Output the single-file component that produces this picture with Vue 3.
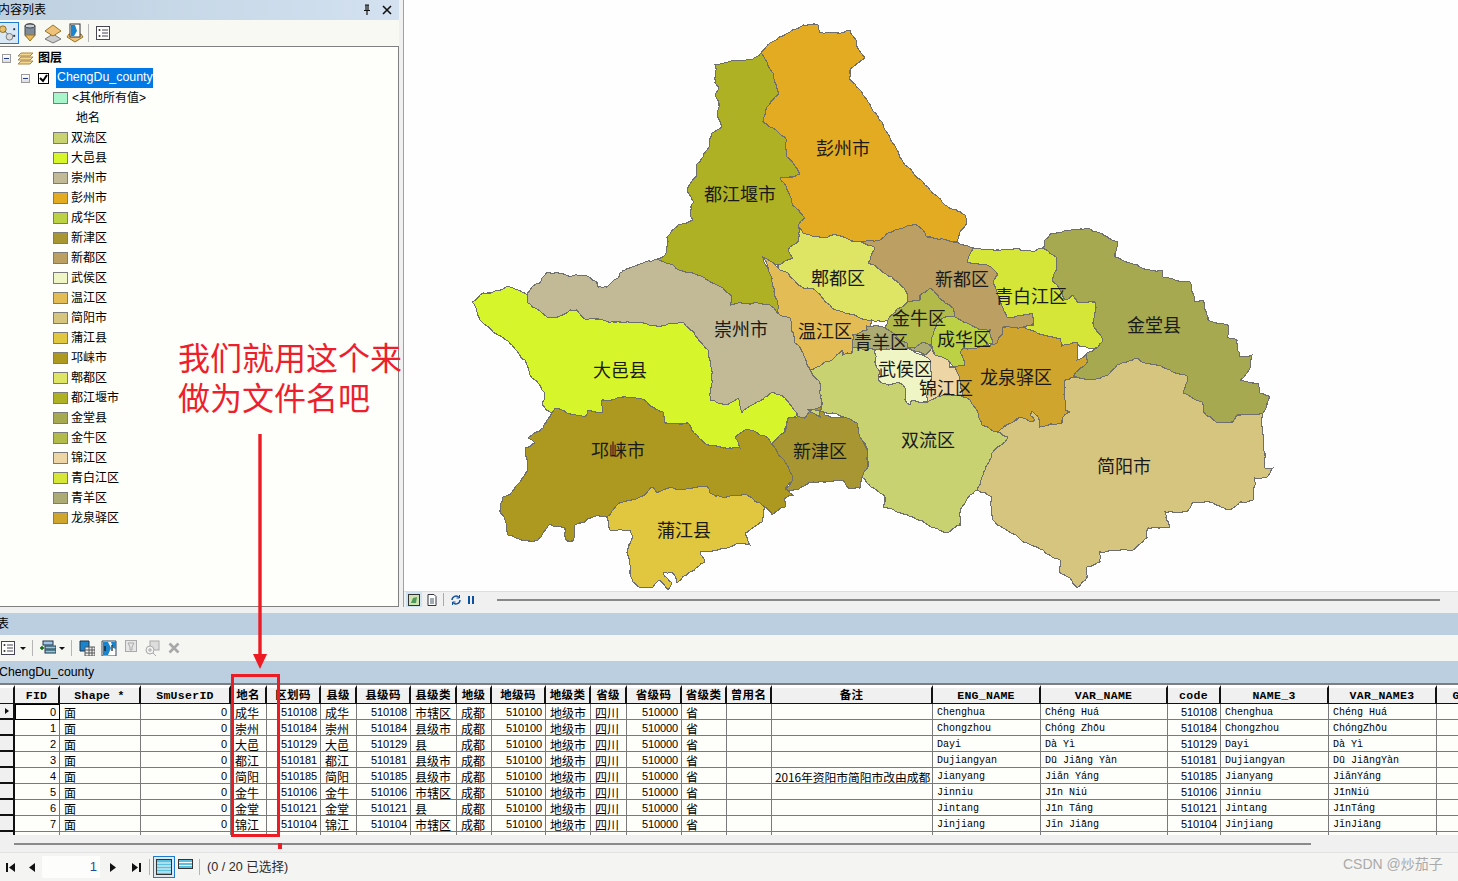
<script setup>
const legend = [
  ['双流区', '#c8d271'], ['大邑县', '#d6f52b'], ['崇州市', '#c2ba97'], ['彭州市', '#e3ab22'],
  ['成华区', '#bcd244'], ['新津区', '#a89632'], ['新都区', '#bb9f63'], ['武侯区', '#f0f5c5'],
  ['温江区', '#e4bc55'], ['简阳市', '#d6c57f'], ['蒲江县', '#e0c73f'], ['邛崃市', '#ad9820'],
  ['郫都区', '#dee564'], ['都江堰市', '#aeb123'], ['金堂县', '#a6a94f'], ['金牛区', '#b2bb4a'],
  ['锦江区', '#eed5a6'], ['青白江区', '#d5e639'], ['青羊区', '#acab74'], ['龙泉驿区', '#cfa52e']
]

const shapes = [
  ['#e3ab22', '761,53 770,43 788,33 803,25 818,25 820,33 837,33 850,30 857,47 865,58 850,70 850,80 867,100 885,130 905,165 925,185 945,205 965,215 967,223 960,232 957,242 927,237 923,230 915,224 903,228 888,233 880,240 857,242 837,235 823,238 803,233 798,225 805,218 792,203 780,178 800,174 787,157 787,140 763,122 767,107 778,95 773,73 767,62'],
  ['#aeb123', '761,53 753,59 740,61 728,62 715,65 715,83 719,88 715,95 719,103 718,118 721,128 712,133 710,145 703,157 696,165 696,177 687,191 694,202 690,212 693,220 678,225 667,237 665,255 657,259 673,265 687,273 703,277 717,285 732,297 731,305 753,303 770,305 777,313 782,305 775,283 763,257 778,265 793,258 788,250 798,242 798,225 805,218 792,203 780,178 800,174 787,157 787,140 763,122 767,107 778,95 773,73 767,62'],
  ['#c2ba97', '657,259 635,266 620,273 618,278 607,287 598,287 597,282 582,275 570,277 558,273 548,272 542,278 540,283 532,287 527,295 528,303 548,318 558,317 570,310 577,310 587,320 620,322 640,322 660,327 683,322 695,335 708,350 712,380 710,400 727,405 738,398 742,413 757,402 773,392 785,398 797,413 798,418 810,418 822,405 822,383 810,370 803,353 795,343 790,318 778,313 777,313 770,305 753,303 731,305 732,297 717,285 703,277 687,273 673,265'],
  ['#d6f52b', '472,302 483,293 493,292 507,286 527,295 528,303 548,318 558,317 570,310 577,310 587,320 620,322 640,322 660,327 683,322 695,335 708,350 712,380 710,400 727,405 738,398 742,413 757,402 773,392 785,398 797,413 798,418 788,418 787,423 783,435 772,445 768,438 750,430 745,430 735,438 740,448 723,448 708,445 697,435 688,423 677,423 665,423 663,412 647,402 633,397 623,397 617,398 602,400 603,412 588,410 585,417 567,413 555,408 552,413 542,405 545,393 535,380 530,375 525,360 512,345 498,335 480,320'],
  ['#ad9820', '552,413 555,408 567,413 585,417 588,410 603,412 602,400 617,398 623,397 633,397 647,402 663,412 665,423 677,423 688,423 697,435 708,445 723,448 740,448 735,438 745,430 750,430 768,438 772,445 785,462 793,480 785,488 793,495 785,498 785,507 772,515 765,507 747,495 722,497 710,493 708,487 693,488 673,488 657,493 653,487 640,497 617,505 607,517 593,517 575,525 573,541 567,541 565,528 550,524 538,540 528,541 508,535 505,520 500,512 503,497 512,492 528,470 525,448 535,443 528,438 543,428'],
  ['#e0c73f', '607,517 617,505 640,497 653,487 657,493 673,488 693,488 708,487 710,493 722,497 747,495 765,507 762,522 745,533 750,545 737,543 730,547 700,552 705,562 690,572 677,583 672,572 663,573 672,583 668,590 660,580 653,587 642,588 633,582 630,570 627,553 633,537 630,530 610,530 608,520'],
  ['#a89632', '772,445 785,432 788,418 805,418 810,410 822,408 825,415 847,417 857,422 862,440 868,452 868,467 862,477 860,488 848,488 843,480 813,482 798,490 785,489 793,480 785,462'],
  ['#e4bc55', '763,257 772,278 777,300 778,313 790,318 795,343 803,353 810,370 825,362 832,360 842,350 843,355 852,353 853,345 853,335 867,330 872,320 845,313 832,308 812,288 803,288 788,273 778,268 772,262'],
  ['#dee564', '798,225 803,233 823,238 837,235 857,242 875,248 868,263 892,277 907,293 908,302 897,309 888,320 872,320 845,313 832,308 812,288 803,288 788,273 778,268 778,265 793,258 788,250 798,242'],
  ['#bb9f63', '857,242 880,240 888,233 903,228 915,224 923,230 927,237 957,242 973,248 967,262 987,265 998,275 993,282 1003,308 1007,317 1032,313 1033,325 1023,327 1003,327 1003,333 997,343 990,345 993,343 990,330 980,330 967,323 955,317 953,308 945,303 930,288 920,295 920,300 908,302 907,293 892,277 868,263 875,248'],
  ['#d5e639', '973,248 998,250 1017,248 1033,252 1043,248 1057,258 1057,268 1052,280 1065,300 1073,295 1077,302 1095,302 1093,323 1103,340 1097,348 1080,347 1077,342 1062,346 1060,338 1043,335 1023,327 1033,325 1032,313 1007,317 1003,308 993,282 998,275 987,265 967,262'],
  ['#a6a94f', '1043,248 1045,240 1052,233 1060,233 1087,228 1100,233 1118,242 1115,257 1150,270 1162,270 1163,277 1190,282 1195,302 1203,300 1208,320 1228,325 1227,337 1237,340 1240,357 1252,355 1250,368 1240,380 1258,383 1260,393 1270,397 1263,413 1237,415 1233,422 1217,423 1203,412 1202,402 1183,393 1188,377 1170,370 1145,363 1137,358 1117,365 1108,375 1087,380 1073,377 1087,363 1087,353 1097,348 1103,340 1093,323 1095,302 1077,302 1073,295 1065,300 1052,280 1057,268 1057,258'],
  ['#d6c57f', '1065,380 1073,377 1087,380 1108,375 1117,365 1137,358 1145,363 1170,370 1188,377 1183,393 1202,402 1203,412 1217,423 1233,422 1237,415 1263,413 1262,427 1265,453 1265,468 1273,468 1267,477 1255,478 1253,500 1240,502 1230,510 1213,503 1193,502 1187,512 1165,512 1170,527 1148,528 1147,538 1133,550 1100,552 1100,562 1087,567 1087,578 1077,588 1070,578 1060,573 1060,560 1043,550 1027,543 1003,528 993,520 992,497 977,490 992,453 1008,437 998,432 1003,428 1020,417 1030,422 1035,420 1030,415 1032,411 1038,417 1040,427 1062,423 1063,417 1070,412 1065,410'],
  ['#cfa52e', '1003,327 1023,327 1043,335 1060,338 1062,346 1077,342 1078,353 1077,360 1087,353 1087,363 1073,377 1065,380 1065,410 1070,412 1063,417 1062,423 1040,427 1038,417 1032,411 1030,415 1035,420 1030,422 1020,417 1013,422 1003,428 998,432 982,425 978,413 970,400 963,397 960,380 955,367 965,365 960,353 963,348 980,347 990,345 997,343 1003,333'],
  ['#c8d271', '875,350 853,348 852,353 843,355 842,350 832,360 825,362 810,370 820,383 820,417 808,410 832,413 857,423 860,437 868,450 868,467 862,477 867,483 885,497 883,507 900,513 935,528 945,533 960,525 960,512 970,495 977,490 992,453 1008,437 998,432 982,425 978,413 970,400 963,397 957,395 947,393 937,397 927,400 920,403 912,400 910,405 905,400 905,388 900,383 888,385 882,383 878,380 880,372 875,363'],
  ['#f0f5c5', '875,350 893,349 908,348 923,355 930,360 932,377 927,387 927,402 920,403 912,400 910,405 905,400 905,388 900,383 888,385 882,383 878,380 880,372 875,363'],
  ['#eed5a6', '923,355 932,348 935,355 948,360 950,367 955,367 960,380 963,397 957,395 947,393 937,397 927,402 927,387 932,377 930,360'],
  ['#acab74', '867,326 883,327 893,333 907,343 908,348 915,348 923,342 932,347 925,355 908,348 893,349 875,350 853,348 853,335 867,330'],
  ['#b2bb4a', '930,288 920,295 920,300 908,302 897,309 888,320 885,327 893,333 907,343 908,348 915,348 923,342 933,345 933,335 937,323 945,317 955,317 953,308 945,303'],
  ['#bcd244', '937,323 945,317 955,317 967,323 980,330 990,330 993,343 980,347 963,348 960,353 965,365 955,367 948,360 935,355 932,347 933,335']
]

function hash(a, b, c, d) {
  const v = Math.sin(a * 12.9898 + b * 78.233 + c * 37.719 + d * 4.1414) * 43758.5453
  return v - Math.floor(v) - 0.5
}
function split(a, b, out) {
  const dx = b[0] - a[0]
  const dy = b[1] - a[1]
  const len = Math.hypot(dx, dy)
  if (len < 4) return
  const k = hash(a[0], a[1], b[0], b[1]) * Math.min(len * 0.22, 2.6) / len
  const m = [(a[0] + b[0]) / 2 - dy * k, (a[1] + b[1]) / 2 + dx * k]
  split(a, m, out)
  out.push(m)
  split(m, b, out)
}
function toPath(str) {
  const p = str.split(' ').map((s) => s.split(',').map(Number))
  const all = []
  p.forEach((a, i) => {
    const b = p[(i + 1) % p.length]
    all.push(a)
    const forward = a[0] < b[0] || (a[0] === b[0] && a[1] < b[1])
    const seg = []
    if (forward) split(a, b, seg)
    else {
      split(b, a, seg)
      seg.reverse()
    }
    all.push(...seg)
  })
  return 'M' + all.map((q) => q[0].toFixed(1) + ' ' + q[1].toFixed(1)).join('L') + 'Z'
}
const regions = shapes.map(([fill, pts]) => ({ fill, d: toPath(pts) }))

const labels = [
  ['彭州市', 843, 148], ['都江堰市', 740, 194], ['郫都区', 838, 278], ['新都区', 962, 279],
  ['青白江区', 1031, 296], ['金牛区', 919, 318], ['金堂县', 1154, 325], ['崇州市', 741, 329],
  ['温江区', 825, 331], ['成华区', 964, 339], ['青羊区', 881, 342], ['武侯区', 905, 369],
  ['大邑县', 620, 370], ['龙泉驿区', 1016, 377], ['锦江区', 946, 388], ['双流区', 928, 440],
  ['简阳市', 1124, 466], ['邛崃市', 618, 450], ['新津区', 820, 451], ['蒲江县', 684, 530]
]

const cols = [
  { w: 15, h: '', c: 'sel' }, { w: 45, h: 'FID', c: 'r' }, { w: 81, h: 'Shape *', c: '' },
  { w: 90, h: 'SmUserID', c: 'r' }, { w: 36, h: '地名', c: '' }, { w: 54, h: '区划码', c: 'r' },
  { w: 36, h: '县级', c: '' }, { w: 54, h: '县级码', c: 'r' }, { w: 46, h: '县级类', c: '' },
  { w: 35, h: '地级', c: '' }, { w: 54, h: '地级码', c: 'r' }, { w: 45, h: '地级类', c: '' },
  { w: 36, h: '省级', c: '' }, { w: 55, h: '省级码', c: 'r' }, { w: 45, h: '省级类', c: '' },
  { w: 45, h: '曾用名', c: '' }, { w: 161, h: '备注', c: 'note' }, { w: 108, h: 'ENG_NAME', c: 'm' },
  { w: 127, h: 'VAR_NAME', c: 'm' }, { w: 53, h: 'code', c: 'r' }, { w: 108, h: 'NAME_3', c: 'm' },
  { w: 108, h: 'VAR_NAME3', c: 'm' }, { w: 40, h: 'G', c: '' }
]
const base = [
  ['成华', '510108', '市辖区', '', 'Chenghua', 'Chéng Huá', 'Chenghua', 'Chéng Huá'],
  ['崇州', '510184', '县级市', '', 'Chongzhou', 'Chóng Zhōu', 'Chongzhou', 'ChóngZhōu'],
  ['大邑', '510129', '县', '', 'Dayi', 'Dà Yì', 'Dayi', 'Dà Yì'],
  ['都江', '510181', '县级市', '', 'Dujiangyan', 'Dū Jiāng Yàn', 'Dujiangyan', 'Dū JiāngYàn'],
  ['简阳', '510185', '县级市', '2016年资阳市简阳市改由成都', 'Jianyang', 'Jiǎn Yáng', 'Jianyang', 'JiǎnYáng'],
  ['金牛', '510106', '市辖区', '', 'Jinniu', 'Jīn Niú', 'Jinniu', 'JīnNiú'],
  ['金堂', '510121', '县', '', 'Jintang', 'Jīn Táng', 'Jintang', 'JīnTáng'],
  ['锦江', '510104', '市辖区', '', 'Jinjiang', 'Jǐn Jiāng', 'Jinjiang', 'JǐnJiāng']
]
const rows = base.map((r, i) => [
  '', String(i), '面', '0', r[0], r[1], r[0], r[1], r[2], '成都', '510100', '地级市', '四川', '510000', '省',
  '', r[3], r[4], r[5], r[1], r[6], r[7], ''
])
rows.push(cols.map(() => ''))
</script>

<template>
  <div class="app">
    <div class="top">
      <aside class="toc">
        <div class="toc-title">
          <span>内容列表</span>
          <span class="win-btns">
            <svg width="12" height="12" viewBox="0 0 12 12"><path d="M4 1h4M5 1v5M7 1v5M3 6.500h6M6 7v4" fill="none" stroke="#111" stroke-width="1.200"/></svg>
            <svg width="12" height="12" viewBox="0 0 12 12"><path d="M2 2l8 8M10 2l-8 8" stroke="#111" stroke-width="1.600"/></svg>
          </span>
        </div>
        <div class="toc-tools">
          <span class="active-btn">
            <svg width="19" height="20" viewBox="0 0 19 20"><circle cx="3" cy="6" r="3.500" fill="#e8c06a" stroke="#8a6a20"/><circle cx="10" cy="14" r="3.500" fill="#dcdcdc" stroke="#777"/><path d="M5 8l3 3" stroke="#456" /><rect x="14" y="5" width="2" height="2" fill="#234"/><rect x="14" y="12" width="2" height="2" fill="#234"/></svg>
          </span>
          <svg class="i18" viewBox="0 0 18 22"><path d="M3 4c0-3 10-3 10 0v9c0 3-10 3-10 0z" fill="#7d8a99" stroke="#444"/><ellipse cx="8" cy="4" rx="5" ry="2" fill="#c5ced8" stroke="#444"/><path d="M3 13h10l-5 6z" fill="#edb95a" stroke="#9a7420"/></svg>
          <svg class="i18" viewBox="0 0 18 22"><path d="M9 12l8 5-8 4-8-4z" fill="#ccc" stroke="#777"/><path d="M9 3l8 6-8 5-8-5z" fill="#eec27a" stroke="#9a7420"/></svg>
          <svg class="i18" viewBox="0 0 18 22"><path d="M3 12h12l2 3-8 5-8-5z" fill="#eec27a" stroke="#9a7420"/><rect x="4" y="2" width="10" height="13" fill="#fff" stroke="#333"/><path d="M5 3h4l2 6-3 5H5z" fill="#1a84cc"/></svg>
          <span class="sep"></span>
          <svg class="i14" viewBox="0 0 14 14"><rect x=".5" y=".5" width="13" height="13" fill="#fff" stroke="#445"/><path d="M6 4h6M6 7h6M6 10h6" stroke="#445"/><circle cx="3.500" cy="4" r="1" fill="#333"/><circle cx="3.500" cy="10" r="1" fill="#333"/></svg>
        </div>
        <div class="tree">
          <div class="t-row">
            <span class="exp e1"></span>
            <svg class="stack" viewBox="0 0 17 13"><path d="M4 1h12l-3 3H1zM4 5h12l-3 3H1zM4 9h12l-3 3H1z" fill="#f5d890" stroke="#b0843a"/></svg>
            <b class="root">图层</b>
          </div>
          <div class="t-row">
            <span class="exp e2"></span>
            <span class="chk"><svg width="9" height="9" viewBox="0 0 9 9"><path d="M1 4l3 3 4-6" fill="none" stroke="#000" stroke-width="2"/></svg></span>
            <span class="sel-name">ChengDu_county</span>
          </div>
          <div class="t-row leg">
            <span class="sw" style="background:#a9f5cb"></span>
            <span class="other">&lt;其他所有值&gt;</span>
          </div>
          <div class="t-row leg"><span class="field">地名</span></div>
          <div v-for="l in legend" :key="l[0]" class="t-row leg">
            <span class="sw" :style="{ background: l[1] }"></span>
            <span>{{ l[0] }}</span>
          </div>
        </div>
      </aside>
      <main class="mapcol">
        <svg class="map" viewBox="404 0 1054 591">
          <path v-for="(r, i) in regions" :key="i" :d="r.d" :fill="r.fill" stroke="#6e6e6e" stroke-width="1.100" shape-rendering="crispEdges"/>
          <text v-for="l in labels" :key="l[0]" :x="l[1]" :y="l[2] + 7" text-anchor="middle" class="lbl">{{ l[0] }}</text>
        </svg>
        <div class="map-status">
          <span class="st-active"><svg width="12" height="12" viewBox="0 0 12 12"><rect x=".5" y=".5" width="11" height="11" fill="#cfe3b0" stroke="#333"/><path d="M3 9l2-5 4-1-1 6z" fill="#4f9a5a"/></svg></span>
          <svg class="st-i" width="10" height="12" viewBox="0 0 10 12"><path d="M1 .5h6l2 2v9H1z" fill="#fff" stroke="#334"/><path d="M3 5h4M3 7h4M3 9h4" stroke="#456"/></svg>
          <span class="st-sep"></span>
          <svg class="st-i" width="12" height="12" viewBox="0 0 12 12"><path d="M2 6a4 4 0 0 1 7-2.600M10 6a4 4 0 0 1-7 2.600" fill="none" stroke="#0d4fa0" stroke-width="1.400"/><path d="M9.500 1v3h-3M2.500 11V8h3" fill="none" stroke="#0d4fa0"/></svg>
          <svg class="st-i" width="8" height="8" viewBox="0 0 8 8"><path d="M1 0h2v8H1zM5 0h2v8H5z" fill="#0d4fa0"/></svg>
          <span class="st-line"></span>
        </div>
      </main>
    </div>

    <section class="tbl">
      <div class="bar bar1">表</div>
      <div class="tbl-tools">
        <svg class="i14" viewBox="0 0 14 14"><rect x=".5" y=".5" width="13" height="13" fill="#fff" stroke="#445"/><path d="M6 4h6M6 7h6M6 10h6" stroke="#445"/><circle cx="3.500" cy="4" r="1" fill="#333"/><circle cx="3.500" cy="10" r="1" fill="#333"/></svg>
        <span class="tri t1"></span>
        <span class="sep"></span>
        <svg class="i16" viewBox="0 0 16 16"><rect x="3" y="1" width="10" height="4" fill="#9fc5e8" stroke="#234"/><rect x="5" y="6" width="11" height="3" fill="#8cd" stroke="#234"/><rect x="5" y="10" width="11" height="3" fill="#8cd" stroke="#234"/><path d="M0 8h4M2 6v4" stroke="#060" stroke-width="1.400"/></svg>
        <span class="tri t2"></span>
        <span class="sep"></span>
        <svg class="i16" viewBox="0 0 16 16"><path d="M1 1h9v10H1z" fill="#1a84cc" stroke="#234"/><path d="M6 7h10v9H6z" fill="#eee" stroke="#555"/><path d="M6 10h10M6 13h10M10 7v9M13 7v9" stroke="#555"/></svg>
        <svg class="i16" viewBox="0 0 16 16"><path d="M1 1h14v15H1z" fill="#fff" stroke="#345"/><path d="M2 2h5l3 6-3 7H2zM10 2h5v7l-3-1z" fill="#1a84cc"/><path d="M4 11V6M11 5v6" stroke="#111" stroke-width="1.200"/></svg>
        <svg class="i12 dis" viewBox="0 0 12 12"><rect x=".5" y=".5" width="11" height="11" fill="#e6e6e6" stroke="#aaa"/><path d="M3 3h6L7 7v3H5V7z" fill="none" stroke="#aaa"/></svg>
        <svg class="i16 dis2" viewBox="0 0 16 16"><rect x="6" y="1" width="9" height="9" fill="#ddd" stroke="#aaa"/><circle cx="6" cy="10" r="4" fill="#f2f2f2" stroke="#aaa"/><path d="M4 10h4M6 8v4M9 13l3 3" stroke="#aaa"/></svg>
        <svg class="i12" viewBox="0 0 12 12"><path d="M1.500 1.500l9 9M10.500 1.500l-9 9" stroke="#a8a8a8" stroke-width="2.600"/></svg>
      </div>
      <div class="bar bar2">ChengDu_county</div>
      <div class="grid">
        <table>
          <colgroup><col v-for="(c, i) in cols" :key="i" :style="{ width: c.w + 'px' }"/></colgroup>
          <thead><tr><th v-for="(c, i) in cols" :key="i">{{ c.h }}</th></tr></thead>
          <tbody>
            <tr v-for="(r, ri) in rows" :key="ri">
              <td v-for="(v, ci) in r" :key="ci" :class="[cols[ci].c, { cur: ri === 0 && ci === 1 }]">
                <i v-if="ci === 0 && ri === 0" class="arrow"></i>{{ v }}
              </td>
            </tr>
          </tbody>
        </table>
      </div>
      <div class="hscroll"><span class="hline"></span></div>
      <div class="pager">
        <svg class="nav" width="10" height="9" viewBox="0 0 10 9"><path d="M0 0h2v9H0zM9 0v9L3 4.500z" fill="#111"/></svg>
        <svg class="nav n2" width="6" height="9" viewBox="0 0 6 9"><path d="M6 0v9L0 4.500z" fill="#111"/></svg>
        <span class="pg-input">1</span>
        <svg class="nav n3" width="6" height="9" viewBox="0 0 6 9"><path d="M0 0v9l6-4.500z" fill="#111"/></svg>
        <svg class="nav n4" width="10" height="9" viewBox="0 0 10 9"><path d="M8 0h2v9H8zM1 0v9l6-4.500z" fill="#111"/></svg>
        <span class="pg-sep"></span>
        <span class="pg-active"><svg width="16" height="16" viewBox="0 0 16 16"><rect x=".5" y=".5" width="15" height="15" fill="#5bc0de" stroke="#333"/><path d="M1 4h14M1 7h14M1 10h14M1 13h14" stroke="#fff"/></svg></span>
        <svg class="pg-i2" width="15" height="10" viewBox="0 0 15 10"><rect x=".5" y=".5" width="14" height="9" fill="#5bc0de" stroke="#333"/><path d="M1 3.500h13M1 6.500h13" stroke="#fff"/></svg>
        <span class="pg-sep s2"></span>
        <span class="pg-text">(0 / 20 已选择)</span>
      </div>
    </section>

    <div class="note-text">我们就用这个来<br/>做为文件名吧</div>
    <svg class="arrow-line" width="16" height="236" viewBox="0 0 16 236"><path d="M8 0V222" stroke="#ed1c24" stroke-width="3.400"/><path d="M1 220h14l-7 15z" fill="#ed1c24"/></svg>
    <div class="red-box"></div>
    <div class="red-tick"></div>
    <div class="mark">CSDN @炒茄子</div>
  </div>
</template>

<style>
html, body { margin: 0; padding: 0; background: #fff; overflow: hidden; }
</style>

<style scoped>
.app {
  position: relative; width: 1458px; height: 881px; overflow: hidden; background: #f0f0f0;
  font: 12px/16px "Liberation Sans", "Noto Sans CJK SC", sans-serif; color: #000;
  display: flex; flex-direction: column;
}
.top { display: flex; height: 613px; flex: none; background: #f0f0f0; }
.toc { width: 399px; flex: none; display: flex; flex-direction: column; margin-right: 4px; height: 607px; background: #fff; }
.toc-title {
  height: 20px; flex: none; display: flex; justify-content: space-between; align-items: center;
  background: linear-gradient(90deg, #bdd0e0, #d3e1f0); margin-left: -2px; padding: 0 6px 0 0; font-size: 12px;
}
.win-btns { display: flex; gap: 8px; }
.toc-tools { height: 26px; flex: none; display: flex; align-items: center; background: #f9f9f4; }
.active-btn {
  width: 19px; height: 22px; margin-right: 3px; box-sizing: border-box; border: 1px solid #1f7ad0; border-left: 0;
  background: #d8e8f6; display: flex; align-items: center; overflow: hidden;
}
.i18 { width: 18px; height: 22px; margin-right: 4px; flex: none; }
.i14 { width: 14px; height: 14px; flex: none; }
.i16 { width: 16px; height: 16px; flex: none; }
.i12 { width: 12px; height: 12px; flex: none; }
.sep { width: 1px; height: 18px; background: #b5b5b5; margin: 0 7px 0 0; flex: none; }
.tree { flex: 1; border: 1px solid #808080; border-left: 0; background: #fefefb; padding-top: 1px; font-size: 12px; }
.t-row { height: 20px; display: flex; align-items: center; white-space: nowrap; position: relative; }
.exp { width: 9px; height: 9px; box-sizing: border-box; border: 1px solid #9a9a9a; background: linear-gradient(#fff, #ddd); position: relative; flex: none; }
.exp::after { content: ""; position: absolute; left: 1px; right: 1px; top: 3px; height: 1px; background: #223a88; }
.e1 { margin-left: 2px; margin-right: 6px; }
.e2 { margin-left: 21px; margin-right: 8px; }
.stack { width: 17px; height: 13px; margin-right: 4px; flex: none; }
.root { font-size: 12px; font-weight: 700; }
.chk { width: 11px; height: 11px; border: 1px solid #000; display: flex; align-items: center; justify-content: center; box-sizing: border-box; background: #fff; margin-right: 7px; flex: none; }
.sel-name { background: #0078e6; color: #fff; height: 20px; line-height: 19px; padding: 0 1px; width: 97px; box-sizing: border-box; font-size: 12.400px; overflow: hidden; }
.leg { padding-left: 53px; }
.sw { width: 15px; height: 12px; box-sizing: border-box; border: 1px solid #7b7b7b; margin-right: 3px; flex: none; }
.other { margin-left: 1px; }
.field { margin-left: 23px; }
.mapcol { flex: 1; display: flex; flex-direction: column; border-left: 1px solid #a0a0a0; height: 607px; }
.map { width: 1054px; height: 591px; flex: none; display: block; background: #fefefe; }
.lbl { font: 400 18px "Noto Sans CJK SC", sans-serif; fill: #1a1a1a; }
.map-status { height: 16px; flex: none; display: flex; align-items: center; background: #f0f0f0; border-top: 1px solid #ddd; box-sizing: border-box; }
.st-active { margin-left: 2px; width: 16px; height: 15px; background: #cfe3f3; display: flex; align-items: center; justify-content: center; flex: none; }
.st-i { margin-left: 5px; flex: none; }
.st-sep { width: 1px; height: 13px; background: #aaa; margin-left: 6px; margin-right: 1px; flex: none; }
.st-line { width: 943px; height: 2px; background: #888; margin-left: 22px; flex: none; }
.tbl { flex: 1; display: flex; flex-direction: column; min-height: 0; }
.bar { background: #bccfe0; height: 22px; line-height: 22px; padding: 0; flex: none; }
.bar1 { margin-left: -3px; font-size: 12px; width: 1461px; }
.bar2 { margin-left: -1px; width: 1459px; font-size: 12.300px; }
.tbl-tools { height: 26px; flex: none; display: flex; align-items: center; background: #f5f5f2; padding-left: 1px; }
.tri { width: 0; height: 0; border: 3px solid transparent; border-top: 3px solid #111; border-bottom: 0; flex: none; }
.t1 { margin: 0 6px 0 5px; }
.t2 { margin: 0 6px 0 -3px; }
.tbl-tools .sep { margin-right: 7px; height: 16px; }
.tbl-tools .i16 { margin-right: 6px; }
.dis { margin: -4px 7px 0 2px; }
.tbl-tools .dis2 { margin-right: 8px; }
.grid { height: 152px; flex: none; border-top: 2px solid #7e7e7e; background: #fefefb; overflow: hidden; box-sizing: border-box; }
table { border-collapse: separate; border-spacing: 0; table-layout: fixed; width: 1477px; }
th {
  height: 19px; box-sizing: border-box; padding: 1px 0 0; border-top: 3px solid #fff; background: #f0f0f0;
  border-right: 2px solid #111; border-bottom: 1px solid #111; overflow: hidden; white-space: nowrap;
  font: 700 11.500px/14px "Liberation Mono", "Noto Sans CJK SC", monospace; letter-spacing: .3px; text-align: center;
}
td {
  height: 16px; box-sizing: border-box; padding: 2px 4px 0; border-right: 1px solid #7a7a7a; border-bottom: 1px solid #7a7a7a;
  overflow: hidden; white-space: nowrap; font: 400 12px/13px "Noto Sans CJK SC", sans-serif; position: relative; text-align: left;
}
td.r { text-align: right; font: 400 11px/13px "Liberation Sans", sans-serif; letter-spacing: -.1px; padding: 1px 3px 0 4px; }
td.m { font: 400 10px/13px "Liberation Mono", monospace; }
td.note { padding-left: 3px; padding-right: 0; font-size: 11.800px; letter-spacing: -.05px; }
td.sel { background: #f0f0f0; border-right: 2px solid #111; border-bottom: 2px solid #111; padding: 0; }
td.cur { outline: 1px solid #000; outline-offset: -1px; }
.arrow { position: absolute; left: 5px; top: 4px; width: 0; height: 0; border: 3.500px solid transparent; border-left: 4px solid #111; border-right: 0; }
.hscroll { height: 17px; flex: none; display: flex; align-items: center; background: #f0f0f0; }
.hline { margin-left: 14px; margin-top: 1px; width: 1297px; height: 2px; background: #8a8a8a; }
.pager { flex: 1; display: flex; align-items: center; background: #f4f4f2; border-top: 1px solid #e2e2e2; box-sizing: border-box; }
.nav { margin-left: 6px; flex: none; }
.n2 { margin-left: 13px; }
.pg-input { width: 58px; height: 22px; margin-left: 7px; box-sizing: border-box; background: #fdfdfb; text-align: right; padding-right: 3px; line-height: 22px; color: #1a4f9a; font-size: 13px; flex: none; }
.n3 { margin-left: 10px; }
.n4 { margin-left: 15px; }
.pg-sep { width: 1px; height: 16px; background: #b5b5b5; margin-left: 8px; flex: none; }
.pg-active { margin-left: 3px; width: 22px; height: 22px; box-sizing: border-box; border: 1px solid #1f7ad0; background: #dce7f1; display: flex; align-items: center; justify-content: center; flex: none; }
.pg-i2 { margin: -6px 0 0 3px; flex: none; }
.s2 { margin-left: 6px; }
.pg-text { margin-left: 7px; color: #2b2b2b; font-size: 12.600px; }
.note-text { position: absolute; left: 178px; top: 336px; font: 400 32px/40px "Noto Sans CJK SC", sans-serif; color: #ee1f2d; white-space: nowrap; }
.arrow-line { position: absolute; left: 252px; top: 434px; }
.red-box { position: absolute; left: 231px; top: 674px; width: 49px; height: 163px; box-sizing: border-box; border: 3px solid #ed1c24; }
.red-tick { position: absolute; left: 278px; top: 843px; width: 4px; height: 6px; background: #ed1c24; }
.mark { position: absolute; left: 1343px; top: 855px; color: #aaa; font: 400 14px/18px "Liberation Sans", "Noto Sans CJK SC", sans-serif; }
</style>
